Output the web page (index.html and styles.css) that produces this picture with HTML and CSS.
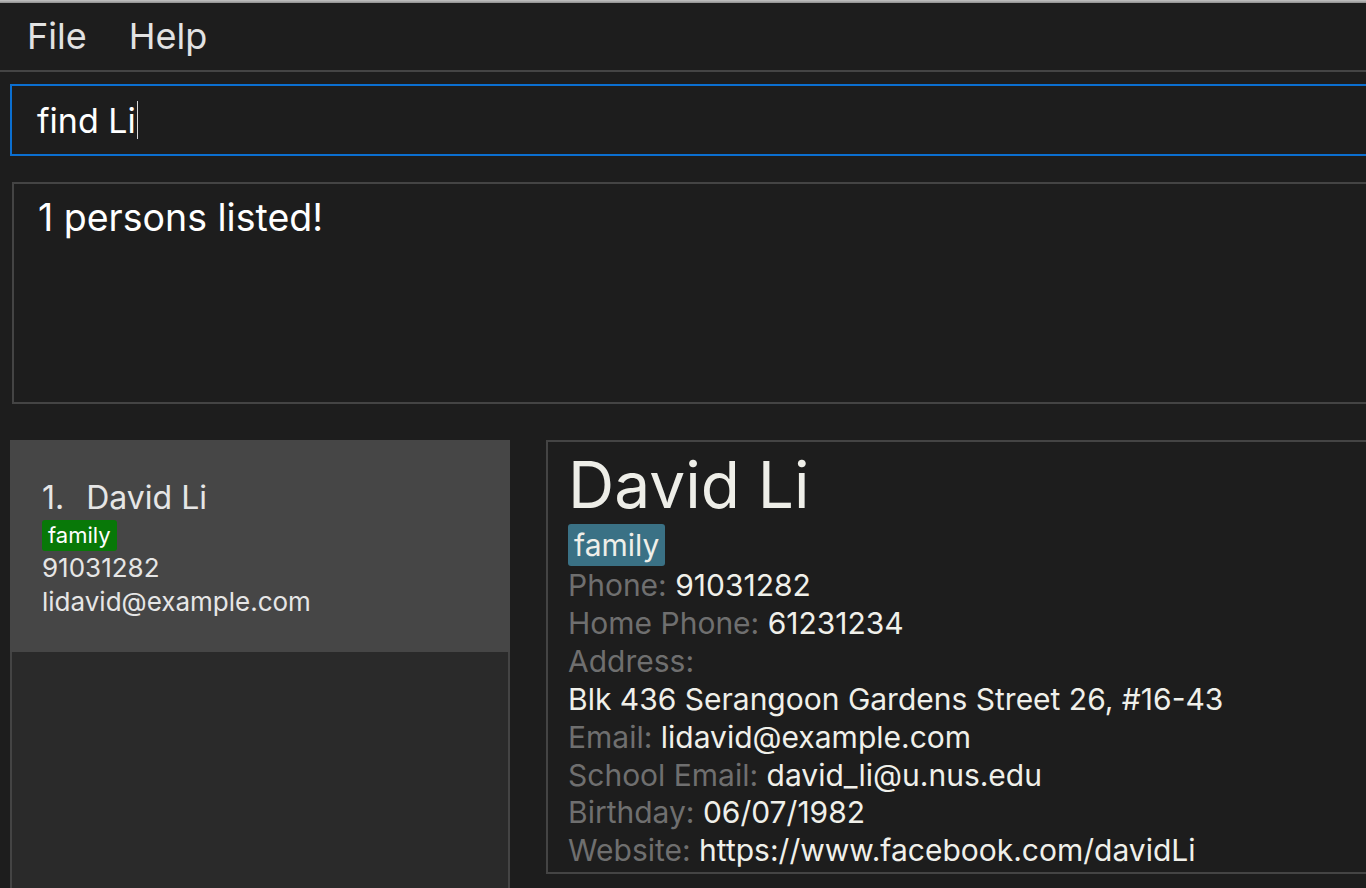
FILE: index.html
```html
<!DOCTYPE html>
<html lang="en">
<head>
<meta charset="utf-8">
<title>Address Book</title>
<link rel="stylesheet" href="styles.css">
</head>
<body>
<div class="window">
  <div class="topedge"></div>
  <div class="menubar">
    <span class="menu">File</span>
    <span class="menu">Help</span>
  </div>
  <div class="cmd">
    <span class="cmd-text">find Li</span><span class="caret"></span>
  </div>
  <div class="result">1 persons listed!</div>
  <div class="main">
    <div class="list">
      <div class="card">
        <div class="card-name"><span class="idx">1.</span>David Li</div>
        <div class="tags"><span class="tag tag-green">family</span></div>
        <div class="card-line">91031282</div>
        <div class="card-line">lidavid@example.com</div>
      </div>
      <div class="list-rest"></div>
    </div>
    <div class="detail">
      <div class="detail-name">David Li</div>
      <div class="detail-tags"><span class="tag tag-blue">family</span></div>
      <div class="row"><span class="label">Phone:</span> <span class="value">91031282</span></div>
      <div class="row"><span class="label">Home Phone:</span> <span class="value">61231234</span></div>
      <div class="row"><span class="label">Address:</span></div>
      <div class="row"><span class="value">Blk 436 Serangoon Gardens Street 26, #16-43</span></div>
      <div class="row"><span class="label">Email:</span> <span class="value">lidavid@example.com</span></div>
      <div class="row"><span class="label">School Email:</span> <span class="value">david_li@u.nus.edu</span></div>
      <div class="row"><span class="label">Birthday:</span> <span class="value">06/07/1982</span></div>
      <div class="row"><span class="label">Website:</span> <span class="value">https://www.facebook.com/davidLi</span></div>
    </div>
  </div>
</div>
</body>
</html>
```

FILE: styles.css
```css
* { box-sizing: border-box; }
html, body {
  margin: 0;
  padding: 0;
  background: #1d1d1d;
  width: 1366px;
  height: 888px;
  overflow: hidden;
  font-family: Inter, "Noto Sans", sans-serif;
}
.window {
  width: 1366px;
  height: 888px;
  overflow: hidden;
  display: flex;
  flex-direction: column;
}
.topedge {
  height: 3px;
  background: linear-gradient(#c4c4c4, #8e8e8e);
  flex: none;
}
.menubar {
  height: 69px;
  flex: none;
  display: flex;
  align-items: center;
  border-bottom: 2px solid #444444;
  padding-left: 27px;
  gap: 42px;
  padding-bottom: 1px;
}
.menu {
  color: #e2e2e2;
  font-size: 36px;
}
.cmd {
  flex: none;
  margin: 12px -20px 0 10px;
  height: 72px;
  border: 2px solid #0b6fd1;
  display: flex;
  align-items: center;
  padding-left: 25px;
}
.cmd-text {
  color: #ffffff;
  font-size: 34px;
}
.caret {
  width: 1px;
  height: 38px;
  background: #d8d8d8;
  margin-left: 1px;
}
.result {
  flex: none;
  margin: 26px -20px 0 12px;
  height: 222px;
  border: 2px solid #444444;
  color: #ffffff;
  font-size: 37.5px;
  line-height: 44px;
  padding: 12px 0 0 24px;
}
.main {
  flex: 1;
  display: flex;
  margin-top: 36px;
  padding-left: 10px;
  gap: 36px;
  min-height: 0;
}
.list {
  width: 500px;
  flex: none;
  display: flex;
  flex-direction: column;
}
.card {
  height: 212px;
  background: #464646;
  padding: 38px 0 0 32px;
  color: #e6e6e6;
}
.card-name {
  font-size: 32px;
  line-height: 40px;
}
.idx {
  margin-right: 22px;
}
.tags {
  display: flex;
  margin-top: 2px;
}
.tag {
  border-radius: 3px;
  color: #ffffff;
}
.tag-green {
  background: #087808;
  font-size: 22px;
  line-height: 31px;
  padding: 0 6px;
}
.card-line {
  font-size: 26px;
  line-height: 34px;
}
.list-rest {
  flex: 1;
  background: #2a2a2a;
  border-left: 2px solid #444444;
  border-right: 2px solid #444444;
}
.detail {
  flex: none;
  width: 850px;
  height: 434px;
  border: 2px solid #444444;
  padding: 7px 0 0 20px;
}
.detail-name {
  font-size: 64px;
  line-height: 72px;
  color: #eeeee8;
}
.detail-tags {
  display: flex;
  margin-top: 3px;
  margin-bottom: 1px;
}
.tag-blue {
  background: #3a7185;
  font-size: 30px;
  line-height: 42px;
  padding: 0 6px;
  color: #efefe9;
}
.row {
  font-size: 30px;
  line-height: 37.9px;
}
.label {
  color: #6f6f6f;
}
.value {
  color: #f0f0ea;
}
```
